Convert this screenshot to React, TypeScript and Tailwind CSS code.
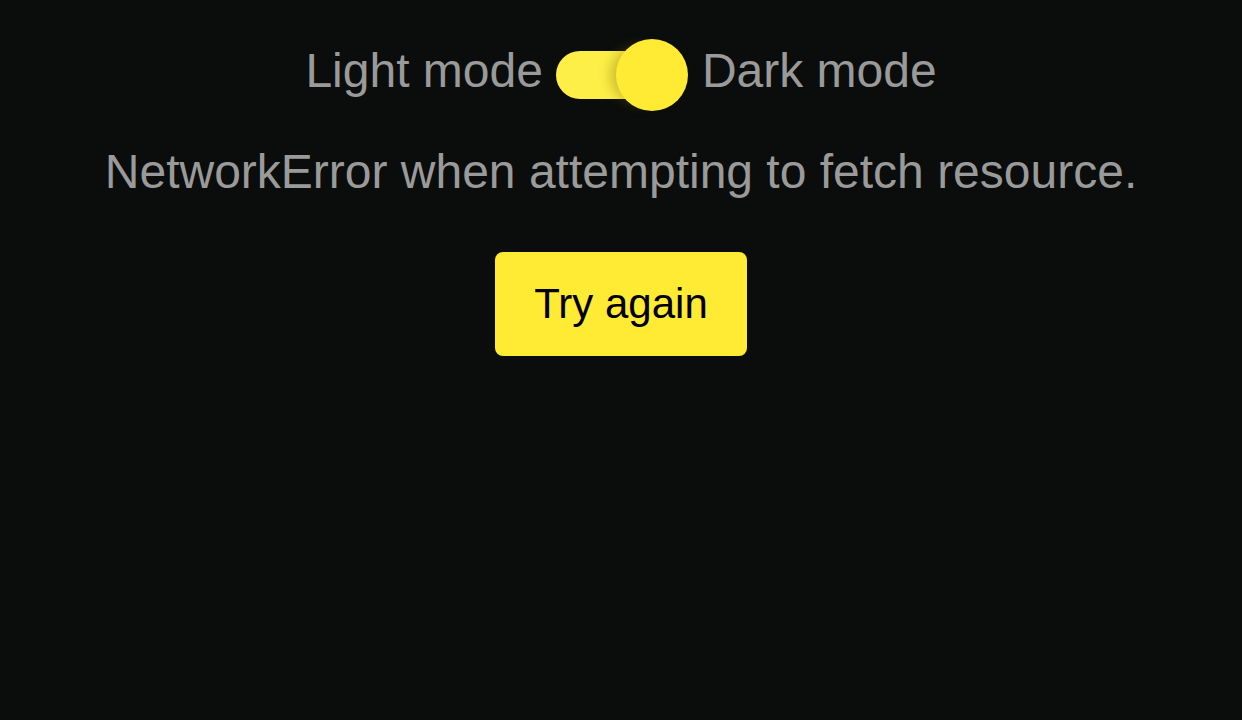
import React, { useState } from 'react';

const App: React.FC = () => {
  const [dark, setDark] = useState(true);

  return (
    <div className="min-h-screen w-full bg-[#0b0d0c] flex flex-col items-center font-['Liberation_Sans',Arial,sans-serif]">
      <div className="mt-[39px] flex items-start">
        <span className="mt-[5px] text-[48px] leading-[54px] text-[#9a9a9a]">Light mode</span>
        <button
          type="button"
          onClick={() => setDark(!dark)}
          className="relative ml-[13px] mr-[14px] w-[132px] h-[72px]"
          aria-label="Toggle theme"
        >
          <span className="absolute left-0 top-[12px] w-[120px] h-[48px] rounded-full bg-[#fdef48]" />
          <span
            className={
              dark
                ? 'absolute right-0 top-0 w-[72px] h-[72px] rounded-full bg-[#ffeb33] shadow-[-12px_0_12px_-6px_rgba(120,100,0,0.35)]'
                : 'absolute left-0 top-0 w-[72px] h-[72px] rounded-full bg-[#ffeb33] shadow-[12px_0_12px_-6px_rgba(120,100,0,0.35)]'
            }
          />
        </button>
        <span className="mt-[5px] text-[48px] leading-[54px] text-[#9a9a9a]">Dark mode</span>
      </div>

      <p className="mt-[34px] text-[48px] leading-[54px] text-[#9a9a9a]">
        NetworkError when attempting to fetch resource.
      </p>

      <button
        type="button"
        className="mt-[53px] w-[252px] h-[104px] rounded-lg bg-[#ffeb33] flex items-center justify-center text-[42px] leading-[48px] text-black"
      >
        Try again
      </button>
    </div>
  );
};

export default App;
